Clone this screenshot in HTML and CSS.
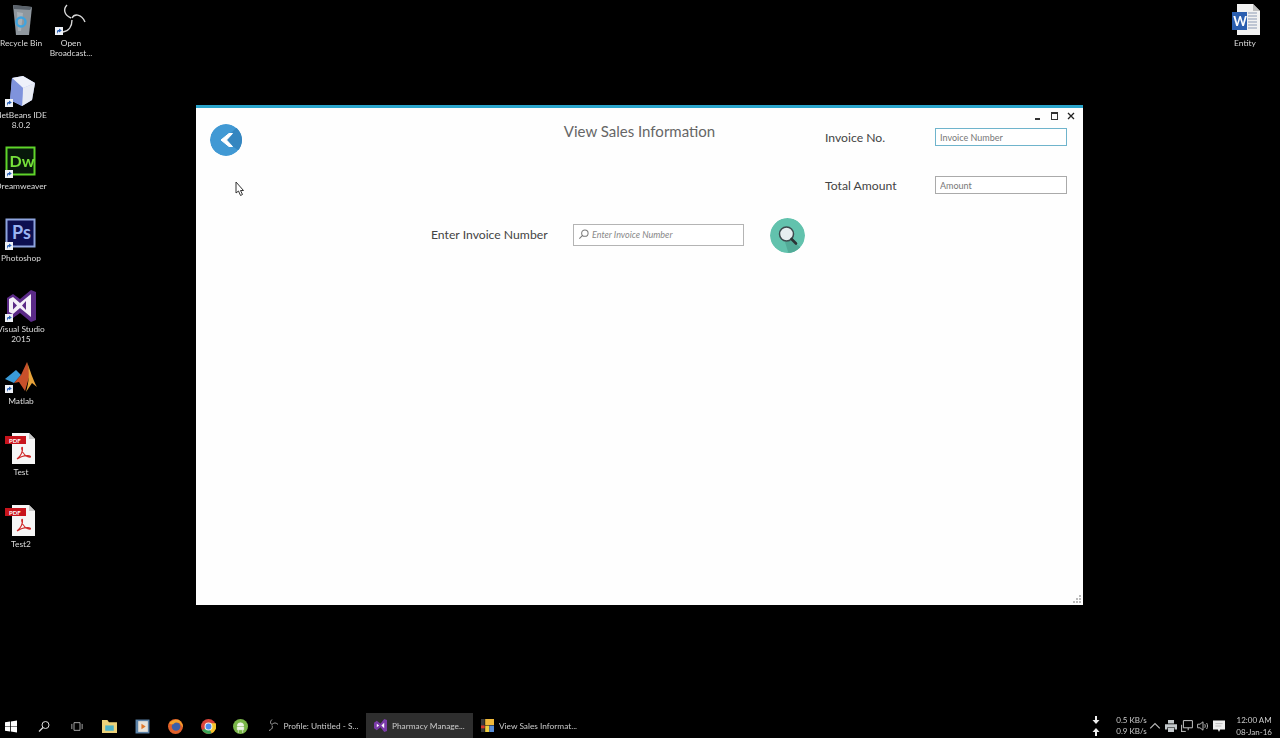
FILE: index.html
```html
<!DOCTYPE html>
<html lang="en">

<head>
    <meta charset="UTF-8">
    <title>View Sales Information</title>
    <link rel="stylesheet" href="styles.css">
</head>

<body>
    <svg class="defs" width="0" height="0">
        <symbol id="badge" viewBox="0 0 8 8">
            <rect width="8" height="8" fill="#eef1f6" />
            <path d="M2 7V4.5C2 3.4 2.8 3 4 3V1.4L6.8 3.6 4 5.6V4.2C3.2 4.2 2.9 5 2 7Z" fill="#2a62b8" />
        </symbol>
        <symbol id="pdf" viewBox="0 0 32 32">
            <path d="M7 0H24L30 6V31H7Z" fill="#f6f6f6" />
            <path d="M24 0L30 6H24Z" fill="#c9c9c9" />
            <rect y="3" width="21" height="8" fill="#c8141c" />
            <text x="4" y="9.6" class="pdf-text">PDF</text>
            <path d="M12 26C16 23 18 18 17.5 14.5C16.6 13.5 16 16 18 19.5C20 22.5 23 24.5 25.5 24C26 22.5 21 22 17 23.5C15 24.2 13 25.5 12 26Z" fill="none" stroke="#cf2a2a" stroke-width="1.1" />
        </symbol>
    </svg>

    <div class="desktop-col col-left">
        <div class="desk-icon">
            <svg class="icon" viewBox="0 0 32 32">
                <path d="M8 1L27 3 24 31H11Z" fill="#8f979e" />
                <path d="M8 1L27 3 25 6 9 5Z" fill="#59616a" />
                <path d="M12 8L18 9 16 27H13Z" fill="#a9b0b6" />
                <circle cx="16" cy="18" r="4.5" fill="none" stroke="#3fa4e0" stroke-width="2.4" />
            </svg>
            <span>Recycle Bin</span>
        </div>
        <div class="desk-icon">
            <svg class="icon" viewBox="0 0 32 32">
                <path d="M7 2L18 0 30 7 27 24 17 30 5 24Z" fill="#a9b8ee" />
                <path d="M18 12L30 7 27 24 17 30Z" fill="#e8ebf4" />
                <path d="M7 2L18 0 30 7 18 12Z" fill="#eef1fa" />
                <path d="M7 2L18 12 17 30 5 24Z" fill="#7f93dc" />
                <use href="#badge" x="0" y="23" width="8" height="8" />
            </svg>
            <span>NetBeans IDE<br>8.0.2</span>
        </div>
        <div class="desk-icon">
            <svg class="icon" viewBox="0 0 32 32">
                <rect x="1.5" y="0.5" width="28" height="27" fill="#07180a" stroke="#5fd42a" stroke-width="2" />
                <text x="4.5" y="20" class="dw-text">Dw</text>
                <use href="#badge" x="0" y="23" width="8" height="8" />
            </svg>
            <span>Dreamweaver</span>
        </div>
        <div class="desk-icon">
            <svg class="icon" viewBox="0 0 32 32">
                <rect x="1.5" y="0.5" width="28" height="27" fill="#0c0f50" stroke="#8da4de" stroke-width="2" />
                <text x="7" y="20" class="ps-text">Ps</text>
                <use href="#badge" x="0" y="23" width="8" height="8" />
            </svg>
            <span>Photoshop</span>
        </div>
        <div class="desk-icon">
            <svg class="icon" viewBox="0 0 32 32">
                <path d="M2 8L8 4 15 9 26 0 31 2V30L26 32 15 23 8 28 2 25Z" fill="#5b2a87" />
                <path d="M4 9L8 7 15 13 26 4V27L15 18 8 24 4 22ZM8 11.500V19.500L12 15.500ZM21 11L17 15.500 21 20Z" fill="#f4f0f8" fill-rule="evenodd" />
                <use href="#badge" x="0" y="24" width="8" height="8" />
            </svg>
            <span>Visual Studio<br>2015</span>
        </div>
        <div class="desk-icon">
            <svg class="icon" viewBox="0 0 32 32">
                <path d="M0 17L11 8 16 13 9 21Z" fill="#3a9bd8" />
                <path d="M9 21L16 13 22 0 25 12 20 29 14 20Z" fill="#c8502a" />
                <path d="M22 0C25 8 28 18 32 25L27 21 21 30C24 20 25 10 22 0Z" fill="#e8a33a" />
                <use href="#badge" x="0" y="23" width="8" height="8" />
            </svg>
            <span>Matlab</span>
        </div>
        <div class="desk-icon">
            <svg class="icon"><use href="#pdf" /></svg>
            <span>Test</span>
        </div>
        <div class="desk-icon">
            <svg class="icon"><use href="#pdf" /></svg>
            <span>Test2</span>
        </div>
    </div>

    <div class="desktop-col col-obs">
        <div class="desk-icon">
            <svg class="icon" viewBox="0 0 32 32">
                <g fill="none" stroke="#d8d8d8" stroke-width="1.4">
                    <path d="M12 1C8 5 9 11 16 14" />
                    <path d="M17 14C19 10 26 9 30 18" />
                    <path d="M17 16C17 22 14 27 8 28" />
                </g>
                <use href="#badge" x="0" y="23" width="8" height="8" />
            </svg>
            <span>Open<br>Broadcast...</span>
        </div>
    </div>

    <div class="desktop-col col-word">
        <div class="desk-icon">
            <svg class="icon" viewBox="0 0 32 32">
                <path d="M8 0H24L31 7V31H8Z" fill="#f2f2f2" />
                <path d="M24 0L31 7H24Z" fill="#bdbdbd" />
                <g stroke="#8c9ab4" stroke-width="1.2">
                    <path d="M19 9H28M19 12H28M19 15H28M19 18H28M19 21H28M19 24H28" />
                </g>
                <rect x="3" y="8" width="15" height="18" fill="#2b5fb0" />
                <text x="4.2" y="21.5" class="word-text">W</text>
            </svg>
            <span>Entity</span>
        </div>
    </div>

    <div class="window">
        <div class="win-controls">
            <span class="win-min"></span>
            <span class="win-max"></span>
            <svg class="win-close" viewBox="0 0 8 8"><path d="M1 1L7 7M7 1L1 7" /></svg>
        </div>

        <div class="top-row">
            <div class="top-left">
                <svg class="back-btn" viewBox="0 0 32 32">
                    <circle cx="16" cy="16" r="16" fill="#4199d4" />
                    <path d="M13 16L31 28 40 10 27 3 20 10Z" fill="#3586c0" />
                    <path d="M19 9.500L11 16 19 22.500H22.500L16.500 16 22.500 9.500Z" fill="#fff" stroke="#fff" stroke-width="1" />
                </svg>
            </div>
            <h1 class="title">View Sales Information</h1>
            <div class="info-form">
                <label>Invoice No.</label>
                <input class="field field-focus" placeholder="Invoice Number">
                <label>Total Amount</label>
                <input class="field" placeholder="Amount">
            </div>
        </div>

        <div class="search-row">
            <label class="search-label">Enter Invoice Number</label>
            <div class="search-box">
                <svg class="search-glass" viewBox="0 0 12 12">
                    <circle cx="7.500" cy="4.500" r="3.500" />
                    <path d="M5 7L1.500 10.500" />
                </svg>
                <input class="search-input" placeholder="Enter Invoice Number">
            </div>
            <svg class="search-btn" viewBox="0 0 35 35">
                <circle cx="17.500" cy="17.500" r="17.500" fill="#62c2ad" />
                <path d="M22 22L36 34 20 40 15 24Z" fill="#52ab98" />
                <circle cx="16.500" cy="16" r="7" fill="#e6eef0" stroke="#3d4a4e" stroke-width="1.5" />
                <path d="M21.500 21L26 25.500" stroke="#2b3335" stroke-width="2.600" stroke-linecap="round" />
            </svg>
        </div>

        <svg class="grip" viewBox="0 0 8 8">
            <path d="M6 0h2v2H6zM3 3h2v2H3zM6 3h2v2H6zM0 6h2v2H0zM3 6h2v2H3zM6 6h2v2H6z" fill="#bbb" />
        </svg>
    </div>

    <svg class="cursor" viewBox="0 0 10 16">
        <path d="M1 1V12L3.500 10 5.500 14.500 7.500 13.500 5.500 9.500H8.500Z" fill="#fff" stroke="#333" stroke-width="1" />
    </svg>

    <div class="taskbar">
        <div class="task-btn">
            <svg class="task-icon" viewBox="0 0 12 12"><path d="M0 1.700L5 1V5.700H0ZM5.800 .9L12 0V5.700H5.800ZM0 6.300H5V11L0 10.300ZM5.800 6.300H12V12L5.800 11.100Z" fill="#fff" /></svg>
        </div>
        <div class="task-btn">
            <svg class="task-icon" viewBox="0 0 12 12"><circle cx="7.500" cy="4.500" r="3.500" fill="none" stroke="#ddd" /><path d="M5 7L1 11" stroke="#ddd" stroke-width="1.200" /></svg>
        </div>
        <div class="task-btn">
            <svg class="task-icon" viewBox="0 0 14 12"><path d="M3.500 1.500H10.500V10.500H3.500ZM1 3V9M13 3V9" fill="none" stroke="#bbb" /></svg>
        </div>
        <div class="task-btn">
            <svg class="task-icon big" viewBox="0 0 14 14"><path d="M0 1H5L6.500 3H14V13H0Z" fill="#ecd27a" /><rect x="3" y="6" width="8" height="5" fill="#4fb3c8" /></svg>
        </div>
        <div class="task-btn">
            <svg class="task-icon big" viewBox="0 0 14 14"><rect x=".5" y=".5" width="13" height="13" fill="#5b82a8" /><rect x="3" y="2" width="9" height="10" fill="#e8e2d8" /><path d="M6 4.500L10 7 6 9.500Z" fill="#e0772a" /></svg>
        </div>
        <div class="task-btn">
            <svg class="task-icon big" viewBox="0 0 14 14"><circle cx="7" cy="7" r="7" fill="#e0602a" /><circle cx="7.500" cy="7" r="4" fill="#3c5fa8" /><path d="M1 4C3 1 7 0 10 1 12 2 14 5 14 8L11 4C9 3 6 3 5 5 3 5 2 5 1 4Z" fill="#f4a42c" /></svg>
        </div>
        <div class="task-btn">
            <svg class="task-icon big" viewBox="0 0 14 14"><circle cx="7" cy="7" r="7" fill="#d9443a" /><path d="M7 7L1 10.500A7 7 0 0 0 10 13.300Z" fill="#3ba657" /><path d="M7 7L10 13.300A7 7 0 0 0 13.700 4H7Z" fill="#f5c52c" /><circle cx="7" cy="7" r="3.200" fill="#4a8cf0" stroke="#eee" /></svg>
        </div>
        <div class="task-btn">
            <svg class="task-icon big" viewBox="0 0 14 14"><circle cx="7" cy="7" r="7" fill="#7ab648" /><path d="M4 6.500A3 3 0 0 1 10 6.500ZM4 7.500H10V10H4ZM5 10V13M9 10V13" fill="#eef3e8" stroke="#eef3e8" stroke-width=".6" /></svg>
        </div>

        <div class="task-app app-obs">
            <svg class="app-icon obs-small" viewBox="0 0 12 12"><g fill="none" stroke="#ccc" stroke-width=".8"><path d="M5 0C3 2 3 4 5 5" /><path d="M5 5C7 3 9 3 11 5" /><path d="M5 6C6 8 5 10 2 11" /></g></svg>
            <span>Profile: Untitled - S...</span>
        </div>
        <div class="task-app app-active">
            <svg class="app-icon" viewBox="0 0 14 14"><path d="M0 4L3 2 7 5 11 0 14 1V13L11 14 7 9 3 12 0 10Z" fill="#7a3aa8" /><path d="M3 5V9L5.500 7ZM11 4L8 7 11 10Z" fill="#fff" /></svg>
            <span>Pharmacy Manage...</span>
        </div>
        <div class="task-app app-sales">
            <svg class="app-icon" viewBox="0 0 14 14"><rect width="4" height="14" fill="#3a3a3a" /><rect y="7" width="4" height="3" fill="#d8372a" /><rect x="4.500" width="9.500" height="6.500" fill="#f0b93a" /><rect x="4.500" y="7" width="4.500" height="7" fill="#f0d040" /><rect x="9" y="7" width="5" height="7" fill="#5a8ed8" /></svg>
            <span>View Sales Informat...</span>
        </div>

        <div class="tray">
            <div class="net-arrows">
                <svg viewBox="0 0 8 8"><path d="M3 0H5V4H7.500L4 8 .5 4H3Z" /></svg>
                <svg viewBox="0 0 8 8"><path d="M3 8H5V4H7.500L4 0 .5 4H3Z" /></svg>
            </div>
            <div class="net-speed">
                <span>0.5 KB/s</span>
                <span>0.9 KB/s</span>
            </div>
            <svg class="tray-icon" viewBox="0 0 10 10"><path d="M1 7L5 3 9 7" fill="none" stroke="#bbb" /></svg>
            <svg class="tray-icon" viewBox="0 0 10 10"><path d="M2.500 0H7.500V3H2.500ZM0 3.500H10V8H8V6H2V8H0ZM2.500 6.500H7.500V10H2.500Z" fill="#c4c9cc" /></svg>
            <svg class="tray-icon" viewBox="0 0 10 10"><path d="M2 .5H9.500V6.500H2ZM.5 4V9.500M0 9.500H4M6 6.500V8.500" fill="none" stroke="#ccc" stroke-width=".8" /></svg>
            <svg class="tray-icon" viewBox="0 0 10 10"><path d="M.5 3.500H2.500L5 1.500V8.500L2.500 6.500H.5ZM6.500 3.500C7 4.500 7 5.500 6.500 6.500M8 2.500C9 4 9 6 8 7.500" fill="none" stroke="#bbb" stroke-width=".8" /></svg>
            <svg class="tray-icon" viewBox="0 0 10 10"><path d="M0 .5H10V8H6L5 10 4 8H0Z" fill="#eee" /><path d="M2 3H8M2 5H7" stroke="#aaa" stroke-width=".6" /></svg>
            <div class="clock">
                <span>12:00 AM</span>
                <span>08-Jan-16</span>
            </div>
        </div>
    </div>
</body>

</html>
```
FILE: styles.css
```css
html,
body {
    margin: 0;
    height: 100%;
}

body {
    position: relative;
    width: 1280px;
    height: 738px;
    overflow: hidden;
    background-color: #000;
    font-family: Lato, "Open Sans", sans-serif;
    filter: blur(0.35px);
}

.defs {
    position: absolute;
}

/* desktop icons */
.desktop-col {
    position: absolute;
    top: 4px;
    width: 72px;
    display: flex;
    flex-direction: column;
}

.col-left {
    left: -15px;
}

.col-obs {
    left: 35px;
}

.col-word {
    left: 1209px;
}

.desk-icon {
    height: 71.5px;
    display: flex;
    flex-direction: column;
    align-items: center;
    color: #ddd;
    font-size: 8.4px;
    line-height: 10px;
    text-align: center;
    white-space: nowrap;
}

.icon {
    width: 32px;
    height: 32px;
    margin-bottom: 2px;
    flex-shrink: 0;
    overflow: visible;
}

.pdf-text {
    font-size: 6px;
    font-weight: 700;
    fill: #fff;
}

.dw-text {
    font-size: 16px;
    font-weight: 700;
    fill: #76e03a;
}

.ps-text {
    font-size: 18px;
    font-weight: 700;
    fill: #9ab4f2;
}

.word-text {
    font-size: 13px;
    font-weight: 700;
    fill: #fff;
}

/* app window */
.window {
    position: absolute;
    left: 196px;
    top: 105px;
    width: 887px;
    height: 500px;
    box-sizing: border-box;
    padding-top: 13px;
    background-color: #fefefe;
    border-top: 3px solid #2aa5cc;
    color: #444;
}

.win-controls {
    position: absolute;
    top: 4px;
    right: 8px;
    display: flex;
    align-items: center;
    gap: 9px;
}

.win-min {
    width: 5px;
    height: 2px;
    margin: 5px 2px 0 0;
    background-color: #333;
}

.win-max {
    width: 5px;
    height: 5px;
    border: 1px solid #333;
    border-top-width: 2px;
}

.win-close {
    width: 8px;
    height: 8px;
    stroke: #222;
    stroke-width: 1.3;
}

.top-row {
    display: grid;
    grid-template-columns: 1fr auto 1fr;
}

.back-btn {
    width: 32px;
    height: 32px;
    display: block;
    margin: 3px 0 0 14px;
    clip-path: circle(50%);
}

.title {
    margin: 0;
    font-size: 15px;
    font-weight: 400;
    line-height: 20px;
    color: #666;
}

.info-form {
    justify-self: end;
    margin: 7px 16px 0 0;
    display: grid;
    grid-template-columns: 110px 132px;
    grid-auto-rows: 18px;
    row-gap: 30px;
    align-items: center;
    font-size: 12.2px;
}

.field {
    width: 100%;
    height: 18px;
    box-sizing: border-box;
    padding: 0 4px;
    border: 1px solid #aaa;
    outline: none;
    background-color: #fff;
    font-family: inherit;
    font-size: 9px;
}

.field-focus {
    border-color: #6fb4cc;
}

.field::placeholder {
    color: #777;
    opacity: 1;
}

.search-row {
    display: flex;
    align-items: center;
    margin-top: 24px;
    padding-left: 235px;
}

.search-label {
    width: 142px;
    margin-top: -3px;
    font-size: 12.2px;
}

.search-box {
    display: flex;
    align-items: center;
    width: 171px;
    height: 22px;
    margin-top: -2px;
    box-sizing: border-box;
    padding-left: 4px;
    border: 1px solid #b4b4b4;
    background-color: #fff;
}

.search-glass {
    width: 11px;
    height: 11px;
    flex-shrink: 0;
    margin-right: 3px;
    fill: none;
    stroke: #777;
    stroke-width: 1.100;
}

.search-input {
    flex: 1;
    min-width: 0;
    border: 0;
    padding: 0;
    outline: none;
    background: transparent;
    font-family: inherit;
    font-size: 9px;
    font-style: italic;
}

.search-input::placeholder {
    color: #888;
    opacity: 1;
}

.search-btn {
    width: 35px;
    height: 35px;
    margin-left: 26px;
    clip-path: circle(50%);
}

.grip {
    position: absolute;
    right: 2px;
    bottom: 2px;
    width: 8px;
    height: 8px;
}

.cursor {
    position: absolute;
    left: 235px;
    top: 181px;
    width: 10px;
    height: 16px;
}

/* taskbar */
.taskbar {
    position: absolute;
    left: 0;
    right: 0;
    bottom: 0;
    height: 25px;
    display: flex;
    align-items: stretch;
    margin-left: -5px;
    background-color: #000;
    color: #ccc;
    font-size: 8.3px;
}

.task-btn {
    width: 32.8px;
    display: flex;
    align-items: center;
    justify-content: center;
}

.task-icon {
    width: 12px;
    height: 13px;
    margin-top: 1px;
}

.task-icon.big {
    width: 15px;
    height: 15px;
}

.task-app {
    display: flex;
    align-items: center;
    white-space: nowrap;
}

.task-app span {
    margin-top: 1px;
}

.app-obs {
    width: 108.6px;
    padding-left: 10px;
    box-sizing: border-box;
}

.app-active {
    width: 107px;
    padding-left: 8px;
    box-sizing: border-box;
    background-color: #2e2e2e;
}

.app-sales {
    width: 107px;
    padding-left: 8px;
    box-sizing: border-box;
}

.app-icon {
    width: 13px;
    height: 13px;
    margin-right: 5px;
    flex-shrink: 0;
}

.obs-small {
    width: 12px;
    margin-right: 4px;
}

.tray {
    margin-left: auto;
    display: flex;
    align-items: center;
    padding-right: 8px;
}

.net-arrows {
    display: flex;
    flex-direction: column;
    gap: 4px;
    margin-right: 16px;
}

.net-arrows svg {
    width: 8px;
    height: 8px;
    display: block;
    fill: #eee;
}

.net-speed {
    display: flex;
    flex-direction: column;
    width: 29px;
    font-size: 8px;
    line-height: 11px;
    white-space: nowrap;
}

.tray-icon {
    width: 12px;
    height: 12px;
    margin-left: 4px;
}

.clock {
    display: flex;
    flex-direction: column;
    align-items: center;
    margin-left: 11px;
    font-size: 8px;
    line-height: 12px;
}
```
